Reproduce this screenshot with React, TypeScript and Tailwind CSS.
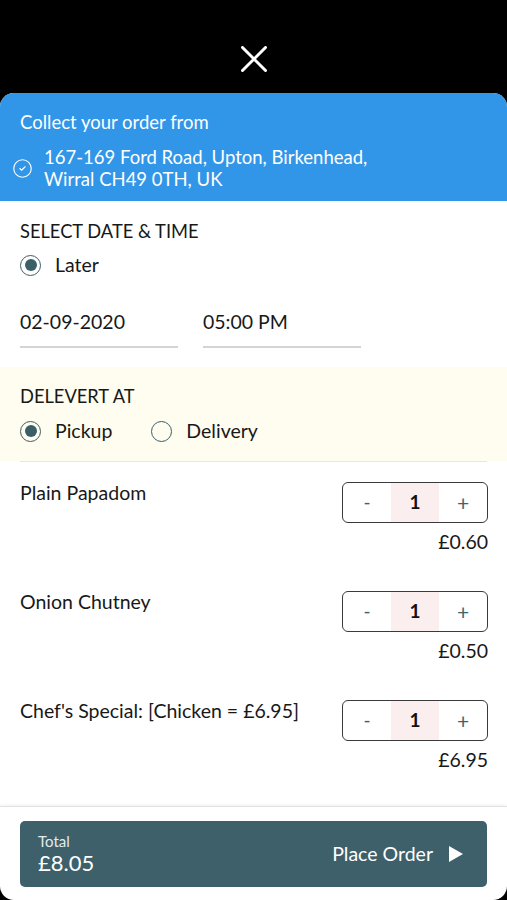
import React from 'react';
import { CircleCheck } from 'lucide-react';

interface IItem {
	id: number;
	name: string;
	qty: number;
	price: string;
}

const items: IItem[] = [
	{ id: 1, name: 'Plain Papadom', qty: 1, price: '£0.60' },
	{ id: 2, name: 'Onion Chutney', qty: 1, price: '£0.50' },
	{ id: 3, name: "Chef's Special: [Chicken = £6.95]", qty: 1, price: '£6.95' },
];

const Radio = ({ checked, label }: { checked: boolean; label: string }) => (
	<div className="flex items-center gap-[14px] leading-[22px]">
		<span className="flex items-center justify-center w-[21px] h-[21px] rounded-full border-[1.5px] border-[#3b5f68]">
			{checked && <span className="w-[12px] h-[12px] rounded-full bg-[#3b5f68]" />}
		</span>
		<span>{label}</span>
	</div>
);

const Stepper = ({ qty }: { qty: number }) => (
	<div className="flex w-[146px] h-[41px] border-[1.5px] border-[#3a3a3a] rounded-[6px] overflow-hidden">
		<button className="w-[48px] flex items-center justify-center text-[#3b6470] text-[19px]">-</button>
		<div className="flex-1 flex items-center justify-center bg-[#fbeeee] text-[19px] font-bold text-[#111]">
			{qty}
		</div>
		<button className="w-[48px] flex items-center justify-center text-[#3b6470] text-[21px]">+</button>
	</div>
);

const App = () => {
	return (
		<div className="h-[900px] bg-black flex flex-col font-['Lato','Liberation_Sans',sans-serif] text-[#181818]">
			<div className="h-[93px] flex justify-center pt-[46px]">
				<svg width="26" height="26" viewBox="0 0 26 26" className="text-white">
					<path d="M1.5 1.5 L24.5 24.5 M24.5 1.5 L1.5 24.5" stroke="currentColor" strokeWidth="3" strokeLinecap="round" />
				</svg>
			</div>
			<div className="flex-1 flex flex-col bg-white rounded-[14px] overflow-hidden">
				<div className="bg-[#3196e8] text-white px-5 pt-[18px] pb-[11px]">
					<p className="text-[18.5px] leading-[22px]">Collect your order from</p>
					<div className="flex items-center mt-[13px]">
						<CircleCheck className="w-[21px] h-[21px] mr-[11px] -ml-[8px]" strokeWidth={1.3} />
						<p className="text-[18.5px] leading-[22px]">
							167-169 Ford Road, Upton, Birkenhead,
							<br />
							Wirral CH49 0TH, UK
						</p>
					</div>
				</div>

				<div className="px-5 pt-[19px] pb-[19px] text-[19.5px]">
					<h3 className="text-[18.3px] leading-[22px] uppercase">Select Date &amp; Time</h3>
					<div className="mt-[12px]">
						<Radio checked label="Later" />
					</div>
					<div className="flex gap-[25px] mt-[35px]">
						<div className="w-[158px] pb-[13px] border-b-2 border-[#d4d4d4] leading-[22px]">02-09-2020</div>
						<div className="w-[158px] pb-[13px] border-b-2 border-[#d4d4d4] leading-[22px]">05:00 PM</div>
					</div>
				</div>

				<div className="bg-[#fffdf0] px-5 pt-[18px] pb-[19px] text-[19.5px]">
					<h3 className="text-[18.3px] leading-[22px] uppercase">Delevert At</h3>
					<div className="flex gap-[39px] mt-[13px]">
						<Radio checked label="Pickup" />
						<Radio checked={false} label="Delivery" />
					</div>
				</div>

				<div className="flex-1 px-5">
					<div className="border-t border-[#e6e6e6]" />
					<div className="flex flex-col gap-[39px] pt-5">
						{items.map((item) => (
							<div key={item.id} className="flex justify-between">
								<p className="text-[19.5px] leading-[22px]">{item.name}</p>
								<div className="flex flex-col items-end -mr-px">
									<Stepper qty={item.qty} />
									<p className="mt-[9px] text-[19.5px] leading-[20px]">{item.price}</p>
								</div>
							</div>
						))}
					</div>
				</div>

				<div className="border-t border-[#e2e2e2] shadow-[0_-1px_3px_rgba(0,0,0,0.06)] px-5 pt-[14px] pb-[13px]">
					<button className="w-full h-[66px] bg-[#3d606b] rounded-[5px] flex items-center justify-between pl-[18px] pr-[24px] text-white">
						<div className="flex flex-col items-start">
							<span className="text-[15px] leading-[18px] text-[#e3ebed]">Total</span>
							<span className="text-[22px] leading-[26px]">£8.05</span>
						</div>
						<div className="flex items-center gap-[16px]">
							<span className="text-[19.5px]">Place Order</span>
							<svg width="14" height="16" viewBox="0 0 14 16">
								<path d="M0 0 L14 8 L0 16 Z" fill="white" />
							</svg>
						</div>
					</button>
				</div>
			</div>
		</div>
	);
};

export default App;
